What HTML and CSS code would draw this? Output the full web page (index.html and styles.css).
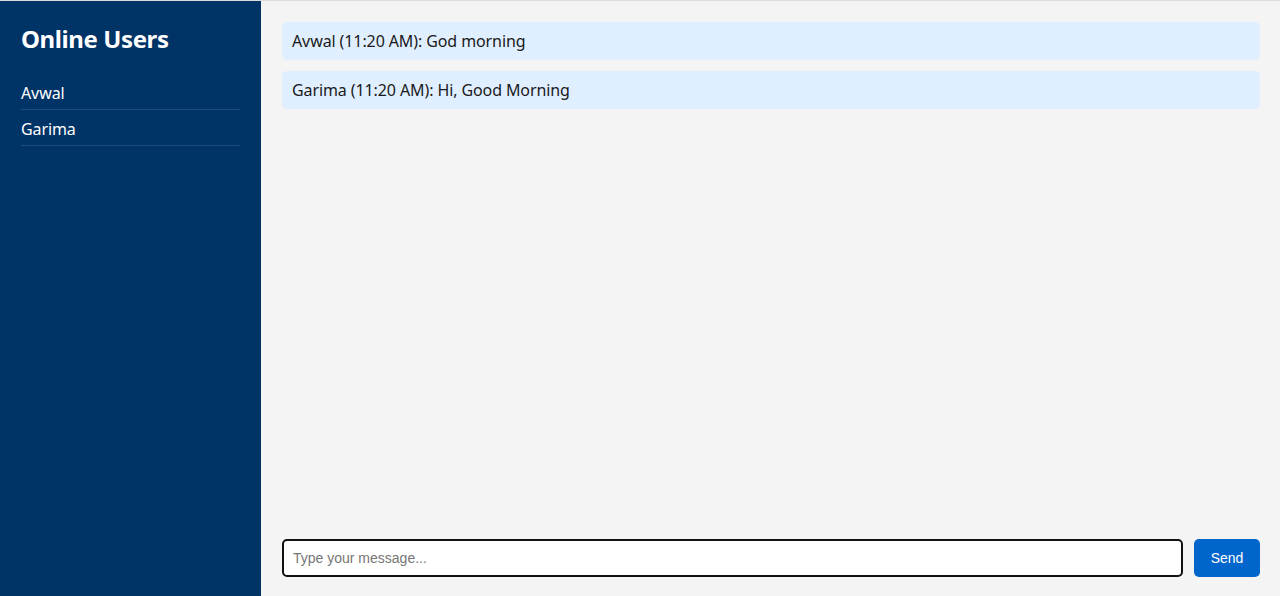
FILE: index.html
```html
<!DOCTYPE html>
<html lang="en">
<head>
<meta charset="utf-8">
<title>Chat</title>
<link rel="stylesheet" href="styles.css">
</head>
<body>
<div class="app">
  <aside class="sidebar">
    <h2 class="sidebar-title">Online Users</h2>
    <ul class="user-list">
      <li class="user">Avwal</li>
      <li class="user">Garima</li>
    </ul>
  </aside>
  <main class="chat">
    <div class="messages">
      <div class="message">Avwal (11:20 AM): God morning</div>
      <div class="message">Garima (11:20 AM): Hi, Good Morning</div>
    </div>
    <form class="composer">
      <input class="composer-input" type="text" placeholder="Type your message..." autofocus>
      <button class="send-btn" type="button">Send</button>
    </form>
  </main>
</div>
</body>
</html>
```

FILE: styles.css
```css
* { box-sizing: border-box; }
html, body { margin: 0; padding: 0; height: 100%; }
body {
  font-family: "Noto Sans", "Open Sans", sans-serif;
  background: #f4f4f4;
  border-top: 1px solid #dcdcdc;
}
.app {
  display: flex;
  height: 595px;
}
.sidebar {
  width: 261px;
  flex: none;
  background: #003366;
  color: #fff;
  padding: 20px 21px;
}
.sidebar-title {
  margin: 0 0 17px;
  font-size: 24px;
  font-weight: 700;
  line-height: 36px;
  letter-spacing: -0.4px;
}
.user-list {
  list-style: none;
  margin: 0;
  padding: 0;
}
.user {
  font-size: 16px;
  line-height: 20px;
  padding: 9px 0 6px;
  border-bottom: 1px solid #1f4c7c;
  letter-spacing: -0.1px;
}
.chat {
  flex: 1;
  display: flex;
  flex-direction: column;
  padding: 21px 20px 19px 21px;
}
.messages {
  flex: 1;
  display: flex;
  flex-direction: column;
  gap: 11px;
}
.message {
  background: #e0efff;
  border-radius: 5px;
  padding: 9px 10px;
  font-size: 16px;
  line-height: 20px;
  color: #1a1a1a;
  letter-spacing: -0.1px;
}
.composer {
  display: flex;
  gap: 11px;
  margin: 0;
}
.composer-input {
  flex: 1;
  height: 38px;
  border: 2px solid #111;
  border-radius: 5px;
  padding: 0 9px;
  font-family: "Liberation Sans", Arial, sans-serif;
  font-size: 14px;
  background: #fff;
  outline: none;
}
.composer-input::placeholder { color: #767676; }
.send-btn {
  width: 66px;
  height: 38px;
  border: none;
  border-radius: 5px;
  background: #0066cc;
  color: #fff;
  font-family: "Liberation Sans", Arial, sans-serif;
  font-size: 14px;
  cursor: pointer;
}
```
